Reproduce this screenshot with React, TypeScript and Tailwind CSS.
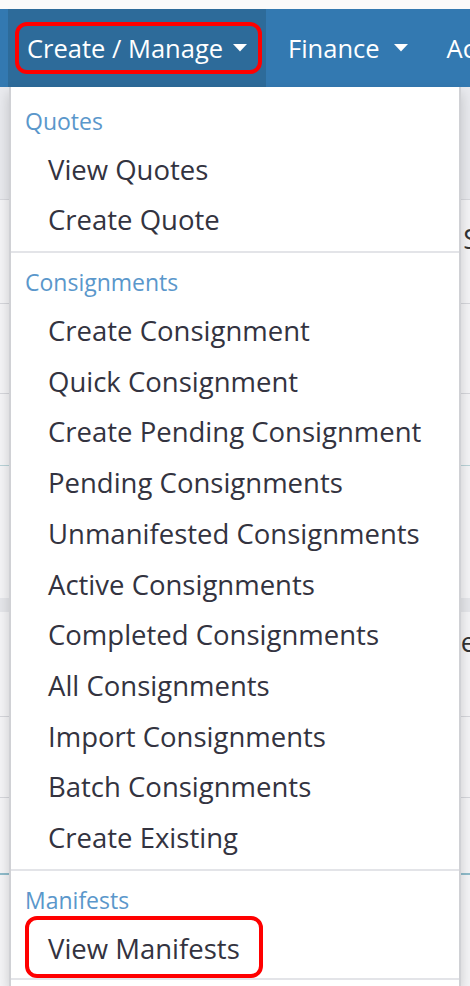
import React from "react";

const consignmentItems = [
  "Create Consignment",
  "Quick Consignment",
  "Create Pending Consignment",
  "Pending Consignments",
  "Unmanifested Consignments",
  "Active Consignments",
  "Completed Consignments",
  "All Consignments",
  "Import Consignments",
  "Batch Consignments",
  "Create Existing",
];

function Caret() {
  return (
    <svg width="14" height="8" viewBox="0 0 14 8" className="shrink-0">
      <polygon points="0,0 14,0 7,7.5" fill="#ffffff" />
    </svg>
  );
}

function Header({ label }: { label: string }) {
  return (
    <div className="h-[46px] flex items-center pl-[14px] text-[23px] text-[#5a97cb]">
      {label}
    </div>
  );
}

function Item({ label }: { label: string }) {
  return (
    <div className="h-[50.7px] flex items-center pl-[37px] text-[27.5px] text-[#333340] whitespace-nowrap">
      {label}
    </div>
  );
}

function Divider() {
  return <div className="h-[2px] bg-[#e3e4e8] my-[6px]" />;
}

export default function App() {
  return (
    <div
      className="relative w-[470px] h-[986px] overflow-hidden bg-[#f5f5f7]"
      style={{ fontFamily: '"Open Sans", "Noto Sans", sans-serif' }}
    >
      {/* top strip */}
      <div className="h-[9px] bg-[#fafafa]" />

      {/* nav bar */}
      <nav className="h-[78px] bg-[#3379b1] flex items-stretch pl-[8px] text-white text-[25.5px] whitespace-nowrap">
        <div className="w-[258px] shrink-0 bg-[#2d6b9a] flex items-center pl-[7px]">
          <div className="h-[52px] w-[247px] border-[4px] border-[#ff0000] rounded-[12px] flex items-center pl-[8px] gap-[10px]">
            <span>Create / Manage</span>
            <Caret />
          </div>
        </div>
        <div className="flex items-center pl-[22px] gap-[14px] shrink-0">
          <span>Finance</span>
          <Caret />
        </div>
        <div className="flex items-center pl-[39px] shrink-0">
          <span>Actions</span>
        </div>
      </nav>

      {/* page content behind the dropdown */}
      <div className="flex flex-col">
        <div className="h-[113px] bg-[#e9eaee] border-b border-[#d8d9de]" />
        <div className="h-[103px] flex items-center justify-end text-[27px] text-[#333]">
          <span className="mr-[-8px] mt-[-24px]">S</span>
        </div>
        <div className="h-[90px] border-t border-[#d6d7dc]" />
        <div className="h-[72px] border-t border-[#d6d7dc]" />
        <div className="h-[133px] border-t border-[#b9d3d8]" />
        <div className="h-[14px] bg-[#e6e7eb]" />
        <div className="h-[104px] flex items-center justify-end text-[27px] text-[#333]">
          <span className="mr-[-6px] mt-[-44px]">e</span>
        </div>
        <div className="h-[81px] border-t border-[#d6d7dc]" />
        <div className="h-[76px] border-t border-[#d6d7dc]" />
        <div className="h-[120px] border-t-2 border-[#8fbccb]" />
      </div>

      {/* dropdown menu */}
      <div className="absolute top-[87px] left-[9px] w-[452px] bottom-0 bg-white border-x-2 border-[#d0d1d5] shadow-[0_6px_12px_rgba(0,0,0,0.18)]">
        <div className="pt-[11px]">
          <Header label="Quotes" />
          <Item label="View Quotes" />
          <Item label="Create Quote" />
          <Divider />
          <Header label="Consignments" />
          {consignmentItems.map((label) => (
            <Item key={label} label={label} />
          ))}
          <Divider />
          <Header label="Manifests" />
          <div className="relative">
            <Item label="View Manifests" />
            <div className="absolute left-[14px] top-[-7px] w-[238px] h-[62px] border-[4px] border-[#ff0000] rounded-[12px]" />
          </div>
          <div className="h-[2px] bg-[#e3e4e8] mt-[4px]" />
        </div>
      </div>
    </div>
  );
}
